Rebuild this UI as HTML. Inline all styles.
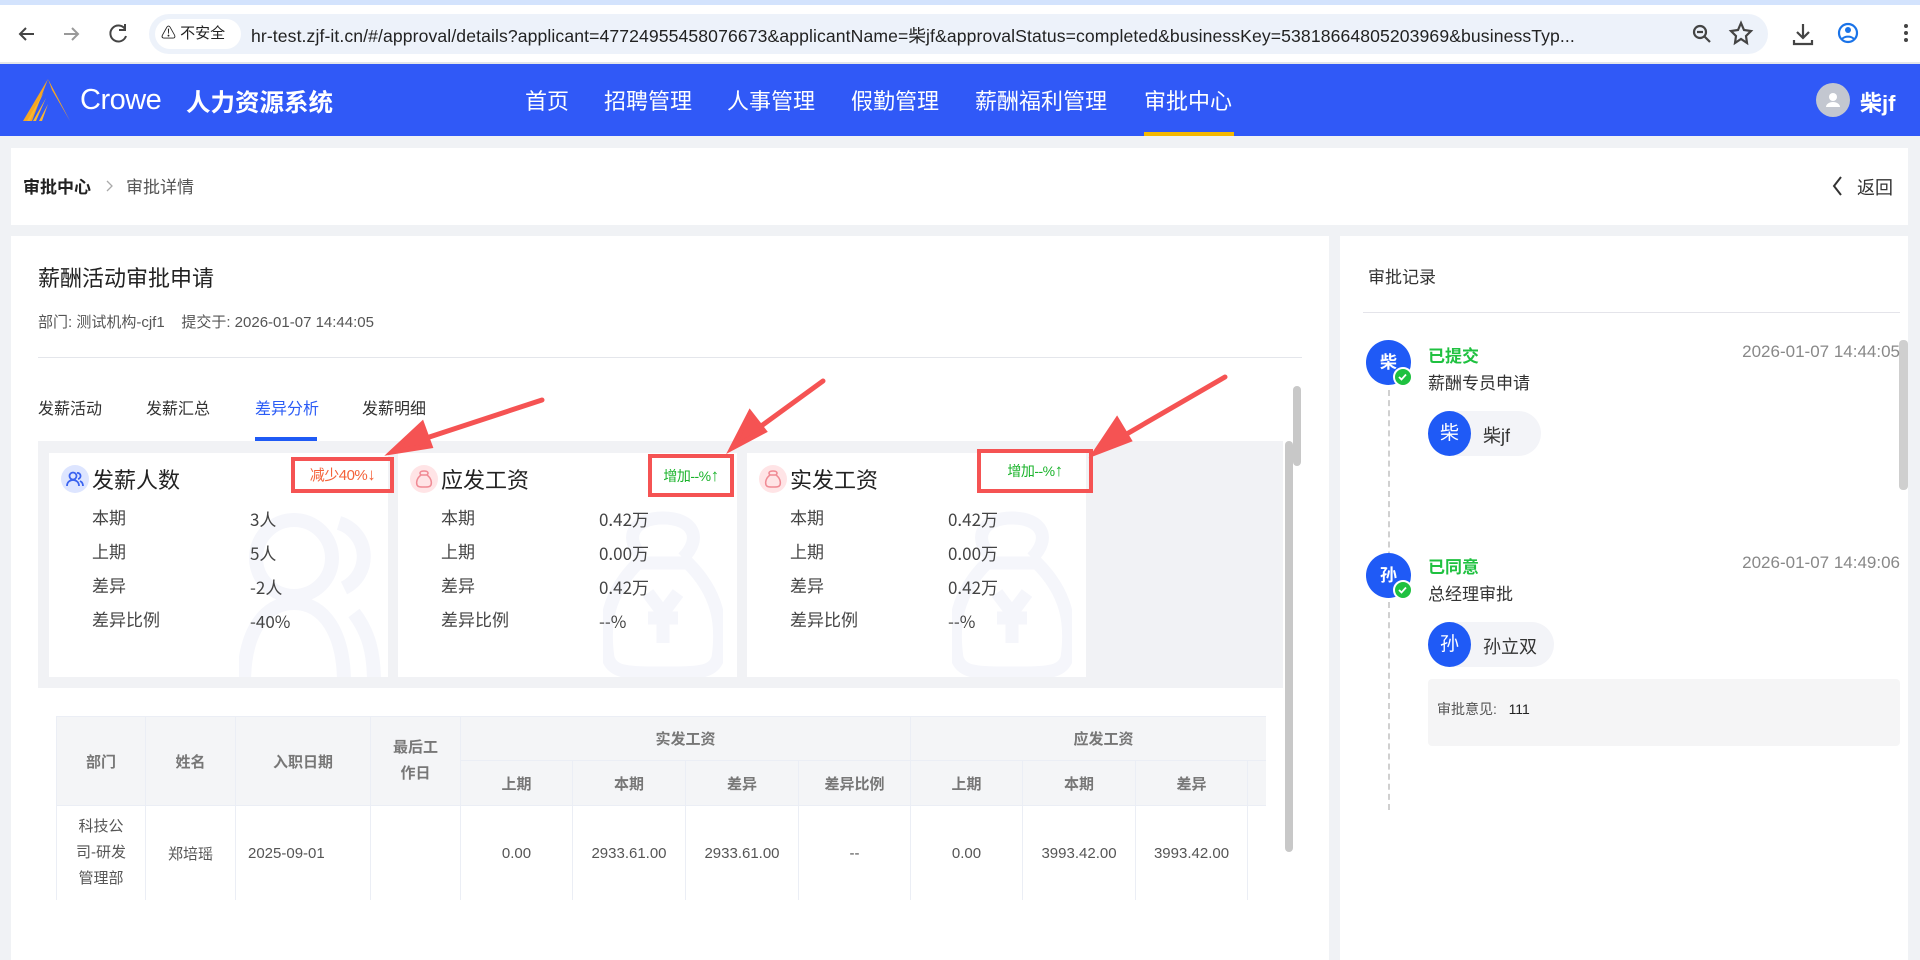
<!DOCTYPE html>
<html><head><meta charset="utf-8"><style>
*{margin:0;padding:0;box-sizing:border-box}
body{width:1920px;height:960px;overflow:hidden;background:#f0f2f5;font-family:"Liberation Sans","Noto Sans CJK SC",sans-serif;position:relative;color:#333}
.a{position:absolute;white-space:nowrap}
.card{position:absolute;background:#fff}
.sc{position:absolute;background:#fff;width:339px;height:224px;overflow:hidden}
.sc .t{position:absolute;left:43px;top:10px;font-size:22px;color:#222}
.sc .ic{position:absolute;left:12px;top:12px;width:28px;height:28px;border-radius:50%}
.sc .l{position:absolute;left:43px;font-size:17px;color:#444;line-height:22px}
.sc .v{position:absolute;left:201px;font-size:17px;color:#444;line-height:22px;font-family:"Noto Sans CJK SC",sans-serif}
table{border-collapse:collapse;position:absolute;left:56px;top:716px;table-layout:fixed}
td,th{border:1px solid #ebeef5;font-size:15px;text-align:center;font-weight:normal}
th{background:#f4f5f7;color:#777;font-weight:bold}
td{color:#555;height:95px}
</style></head><body>
<!-- browser chrome -->
<div class="a" style="left:0;top:0;width:1920px;height:64px;background:#fff"></div>
<div class="a" style="left:0;top:0;width:1920px;height:5px;background:#d3e3fd"></div>
<div class="a" style="left:0;top:62px;width:1920px;height:2px;background:#e3e6ea"></div>
<svg class="a" style="left:0;top:0" width="150" height="64"><g stroke="#444" stroke-width="2" fill="none"><path d="M34 34h-14M26 28l-6 6 6 6"/><path d="M64 34h14M72 28l6 6-6 6" stroke="#999"/><path d="M125 29a8 8 0 1 0 1 7M125 24v6h-6"/></g></svg>
<div class="a" style="left:149px;top:14px;width:1619px;height:40px;border-radius:20px;background:#edf2fa"></div>
<div class="a" style="left:155px;top:19px;width:86px;height:30px;border-radius:15px;background:#fff;font-size:15px;line-height:30px;padding-left:6px;color:#222">⚠ 不安全</div>
<div class="a" style="left:251px;top:23px;font-size:17.6px;color:#222;letter-spacing:0.1px">hr-test.zjf-it.cn/#/approval/details?applicant=47724955458076673&amp;applicantName=柴jf&amp;approvalStatus=completed&amp;businessKey=53818664805203969&amp;businessTyp...</div>
<svg class="a" style="left:1680px;top:18px" width="240" height="40"><g stroke="#444" stroke-width="2.2" fill="none"><circle cx="20" cy="14" r="6"/><path d="M24 18l6 6M17 14h6"/><path d="M61 5l3 7 7 1-5 5 1 7-6-4-6 4 1-7-5-5 7-1z"/><path d="M123 6v13M117 14l6 6 6-6M114 22v4h18v-4"/></g><circle cx="168" cy="15" r="9" stroke="#1a73e8" stroke-width="2.2" fill="none"/><circle cx="168" cy="12" r="3" fill="#1a73e8"/><path d="M162 21a7 5 0 0 1 12 0" stroke="#1a73e8" stroke-width="2" fill="none"/><g fill="#444"><circle cx="226" cy="8" r="2"/><circle cx="226" cy="15" r="2"/><circle cx="226" cy="22" r="2"/></g></svg>
<!-- header -->
<div class="a" style="left:0;top:64px;width:1920px;height:72px;background:#3059f7"></div>
<svg class="a" style="left:22px;top:78px" width="50" height="45"><path d="M26 1L48 43 30 12z" fill="#f5a623"/><path d="M26 1L1 43 10 43z" fill="#f5a623"/><path d="M22 14L5 43h3zM24 20L11 43h3zM26 26L17 43h3" fill="#f7b733"/></svg>
<div class="a" style="left:80px;top:84px;font-size:29px;color:#fff;font-weight:300;letter-spacing:-0.5px">Crowe</div>
<div class="a" style="left:186px;top:84px;font-size:24.5px;color:#fff;font-weight:bold">人力资源系统</div>
<div class="a" style="left:525px;top:84px;font-size:22px;color:#fff">首页</div>
<div class="a" style="left:604px;top:84px;font-size:22px;color:#fff">招聘管理</div>
<div class="a" style="left:727px;top:84px;font-size:22px;color:#fff">人事管理</div>
<div class="a" style="left:851px;top:84px;font-size:22px;color:#fff">假勤管理</div>
<div class="a" style="left:975px;top:84px;font-size:22px;color:#fff">薪酬福利管理</div>
<div class="a" style="left:1144px;top:84px;font-size:22px;color:#fff">审批中心</div>
<div class="a" style="left:1144px;top:132px;width:90px;height:4px;background:#f5b800"></div>
<div class="a" style="left:1816px;top:83px;width:34px;height:34px;border-radius:50%;background:#c3c7d0"></div>
<svg class="a" style="left:1816px;top:83px" width="34" height="34"><circle cx="17" cy="14" r="4" fill="#fff"/><path d="M10 24a7 5 0 0 1 14 0z" fill="#fff"/></svg>
<div class="a" style="left:1860px;top:86px;font-size:22px;color:#fff;font-weight:bold">柴jf</div>
<!-- breadcrumb -->
<div class="card" style="left:11px;top:148px;width:1897px;height:77px"></div>
<div class="a" style="left:23px;top:173px;font-size:17px;font-weight:bold;color:#222">审批中心</div>
<svg class="a" style="left:105px;top:179px" width="10" height="14"><path d="M2 2l5 5-5 5" stroke="#aaa" stroke-width="1.3" fill="none"/></svg>
<div class="a" style="left:126px;top:173px;font-size:17px;color:#555">审批详情</div>
<svg class="a" style="left:1831px;top:175px" width="14" height="22"><path d="M10 2L3 11l7 9" stroke="#333" stroke-width="2" fill="none"/></svg>
<div class="a" style="left:1857px;top:174px;font-size:18px;color:#333">返回</div>
<!-- main card -->
<div class="card" style="left:11px;top:236px;width:1318px;height:724px"></div>
<div class="a" style="left:38px;top:261px;font-size:22px;color:#222">薪酬活动审批申请</div>
<div class="a" style="left:38px;top:311px;font-size:15px;color:#555">部门: 测试机构-cjf1 &nbsp;&nbsp; 提交于: 2026-01-07 14:44:05</div>
<div class="a" style="left:38px;top:357px;width:1264px;height:1px;background:#e4e6eb"></div>
<div class="a" style="left:38px;top:395px;font-size:16px;color:#333">发薪活动</div>
<div class="a" style="left:146px;top:395px;font-size:16px;color:#333">发薪汇总</div>
<div class="a" style="left:255px;top:395px;font-size:16px;color:#2b5cf6">差异分析</div>
<div class="a" style="left:362px;top:395px;font-size:16px;color:#333">发薪明细</div>
<div class="a" style="left:255px;top:437px;width:62px;height:4px;background:#1f5af5"></div>
<div class="a" style="left:38px;top:441px;width:1245px;height:247px;background:#f1f2f5"></div>
<!-- cards -->
<div class="sc" style="left:49px;top:453px">
<svg class="a" style="left:190px;top:50px" width="150" height="180"><g stroke="#f5f6fb" stroke-width="14" fill="none"><circle cx="55" cy="55" r="38"/><path d="M5 180c0-50 20-80 50-80s50 30 50 80"/><path d="M100 20a35 35 0 0 1 5 65M115 110c15 20 20 40 20 70"/></g></svg>
<div class="ic" style="background:#dde5ff"></div>
<svg class="a" style="left:12px;top:12px" width="28" height="28"><g stroke="#3a63f0" stroke-width="1.8" fill="none"><circle cx="12" cy="11" r="3.5"/><path d="M6 21c0-4 3-6 6-6s6 2 6 6M16 8a3 3 0 0 1 1 6M19 16c2 1 3 3 3 5"/></g></svg>
<div class="t">发薪人数</div>
<div class="l" style="top:55px">本期</div><div class="v" style="top:55px">3人</div>
<div class="l" style="top:89px">上期</div><div class="v" style="top:89px">5人</div>
<div class="l" style="top:123px">差异</div><div class="v" style="top:123px">-2人</div>
<div class="l" style="top:157px">差异比例</div><div class="v" style="top:157px">-40%</div>
</div>
<div class="sc" style="left:398px;top:453px">
<svg class="a" style="left:205px;top:55px" width="120" height="170"><g stroke="#f5f6fb" stroke-width="13" fill="none"><path d="M40 50c-20-20-10-40 20-40s40 20 20 40"/><path d="M35 55c-30 30-35 60-30 95 5 15 20 15 55 15s50 0 55-15c5-35 0-65-30-95z"/><path d="M45 85l15 20 15-20M60 105v30M45 110h30"/></g></svg>
<div class="ic" style="background:#ffe4e6"></div>
<svg class="a" style="left:12px;top:12px" width="28" height="28"><g stroke="#f08a94" stroke-width="1.5" fill="none"><path d="M11 10c-2-2-1-4 3-4s5 2 3 4"/><path d="M11 10c-4 3-5 7-4 10 1 2 3 2 7 2s6 0 7-2c1-3 0-7-4-10z"/></g></svg>
<div class="t">应发工资</div>
<div class="l" style="top:55px">本期</div><div class="v" style="top:55px">0.42万</div>
<div class="l" style="top:89px">上期</div><div class="v" style="top:89px">0.00万</div>
<div class="l" style="top:123px">差异</div><div class="v" style="top:123px">0.42万</div>
<div class="l" style="top:157px">差异比例</div><div class="v" style="top:157px">--%</div>
</div>
<div class="sc" style="left:747px;top:453px">
<svg class="a" style="left:205px;top:55px" width="120" height="170"><g stroke="#f5f6fb" stroke-width="13" fill="none"><path d="M40 50c-20-20-10-40 20-40s40 20 20 40"/><path d="M35 55c-30 30-35 60-30 95 5 15 20 15 55 15s50 0 55-15c5-35 0-65-30-95z"/><path d="M45 85l15 20 15-20M60 105v30M45 110h30"/></g></svg>
<div class="ic" style="background:#ffe4e6"></div>
<svg class="a" style="left:12px;top:12px" width="28" height="28"><g stroke="#f08a94" stroke-width="1.5" fill="none"><path d="M11 10c-2-2-1-4 3-4s5 2 3 4"/><path d="M11 10c-4 3-5 7-4 10 1 2 3 2 7 2s6 0 7-2c1-3 0-7-4-10z"/></g></svg>
<div class="t">实发工资</div>
<div class="l" style="top:55px">本期</div><div class="v" style="top:55px">0.42万</div>
<div class="l" style="top:89px">上期</div><div class="v" style="top:89px">0.00万</div>
<div class="l" style="top:123px">差异</div><div class="v" style="top:123px">0.42万</div>
<div class="l" style="top:157px">差异比例</div><div class="v" style="top:157px">--%</div>
</div>
<!-- badges -->
<div class="a" style="left:291px;top:457px;width:103px;height:36px;border:4px solid #f55353;font-size:15px;color:#f4623a;line-height:28px;text-align:center;letter-spacing:-0.5px">减少40%<b style="font-size:17px">↓</b></div>
<div class="a" style="left:648px;top:454px;width:86px;height:43px;border:4px solid #f55353;font-size:14px;color:#19b32a;line-height:35px;text-align:center;letter-spacing:-0.5px">增加--%<b style="font-size:17px">↑</b></div>
<div class="a" style="left:977px;top:449px;width:116px;height:44px;border:4px solid #f55353;font-size:14px;color:#19b32a;line-height:36px;text-align:center;letter-spacing:-0.5px">增加--%<b style="font-size:17px">↑</b></div>
<svg class="a" style="left:0;top:0" width="1920" height="960"><g stroke="#f55353" stroke-width="5" fill="#f55353" stroke-linecap="round">
<path d="M405 445L542 400"/><path d="M392 452l30-28 8 22z"/>
<path d="M742 440L823 381"/><path d="M732 448l18-35 14 18z"/>
<path d="M1106 446L1225 377"/><path d="M1095 453l22-33 12 20z"/>
</g></svg>
<!-- table -->
<div class="a" style="left:56px;top:716px;width:1210px;height:184px;overflow:hidden">
<table style="left:0;top:0;width:1240px">
<colgroup><col style="width:89px"><col style="width:90px"><col style="width:135px"><col style="width:90px"><col style="width:112px"><col style="width:113px"><col style="width:113px"><col style="width:112px"><col style="width:112px"><col style="width:113px"><col style="width:112px"><col style="width:49px"></colgroup>
<tr style="height:44px"><th rowspan="2">部门</th><th rowspan="2">姓名</th><th rowspan="2">入职日期</th><th rowspan="2" style="line-height:26px">最后工<br>作日</th><th colspan="4">实发工资</th><th colspan="4">应发工资</th></tr>
<tr style="height:45px"><th>上期</th><th>本期</th><th>差异</th><th>差异比例</th><th>上期</th><th>本期</th><th>差异</th><th></th></tr>
<tr><td style="line-height:26px">科技公<br>司-研发<br>管理部</td><td>郑培瑶</td><td style="text-align:left;padding-left:12px">2025-09-01</td><td></td><td>0.00</td><td>2933.61.00</td><td>2933.61.00</td><td>--</td><td>0.00</td><td>3993.42.00</td><td>3993.42.00</td><td></td></tr>
</table></div>
<div class="a" style="left:1285px;top:441px;width:8px;height:411px;border-radius:4px;background:#c8c8c8"></div>
<div class="a" style="left:1293px;top:386px;width:8px;height:80px;border-radius:4px;background:#c8c8c8"></div>
<!-- right panel -->
<div class="card" style="left:1340px;top:236px;width:568px;height:724px"></div>
<div class="a" style="left:1368px;top:263px;font-size:17px;color:#333">审批记录</div>
<div class="a" style="left:1363px;top:312px;width:537px;height:1px;background:#e4e4ea"></div>
<div class="a" style="left:1388px;top:390px;height:420px;border-left:2px dashed #d0d0d0"></div>
<div class="a" style="left:1899px;top:340px;width:9px;height:150px;border-radius:4px;background:#cfcfcf"></div>
<!-- item1 -->
<div class="a" style="left:1366px;top:340px;width:45px;height:45px;border-radius:50%;background:#1f5af6;color:#fff;font-size:17px;font-weight:bold;line-height:45px;text-align:center">柴</div>
<div class="a" style="left:1393px;top:367px;width:20px;height:20px;border-radius:50%;background:#1fc140;border:2px solid #fff"></div>
<svg class="a" style="left:1395px;top:369px" width="16" height="16"><path d="M4 8l2.5 2.5L11 5.5" stroke="#fff" stroke-width="1.8" fill="none"/></svg>
<div class="a" style="left:1428px;top:342px;font-size:17px;color:#1fc140;font-weight:bold">已提交</div>
<div class="a" style="left:1428px;top:369px;font-size:17px;color:#333">薪酬专员申请</div>
<div class="a" style="left:1693px;top:342px;font-size:17px;color:#888;width:207px;text-align:right">2026-01-07 14:44:05</div>
<div class="a" style="left:1428px;top:411px;width:113px;height:45px;border-radius:23px;background:#f3f4f8"></div>
<div class="a" style="left:1428px;top:411px;width:43px;height:45px;border-radius:50%;background:#1f5af6;color:#fff;font-size:19px;line-height:45px;text-align:center">柴</div>
<div class="a" style="left:1483px;top:422px;font-size:18px;color:#333">柴jf</div>
<!-- item2 -->
<div class="a" style="left:1366px;top:553px;width:45px;height:45px;border-radius:50%;background:#1f5af6;color:#fff;font-size:17px;font-weight:bold;line-height:45px;text-align:center">孙</div>
<div class="a" style="left:1393px;top:580px;width:20px;height:20px;border-radius:50%;background:#1fc140;border:2px solid #fff"></div>
<svg class="a" style="left:1395px;top:582px" width="16" height="16"><path d="M4 8l2.5 2.5L11 5.5" stroke="#fff" stroke-width="1.8" fill="none"/></svg>
<div class="a" style="left:1428px;top:553px;font-size:17px;color:#1fc140;font-weight:bold">已同意</div>
<div class="a" style="left:1428px;top:580px;font-size:17px;color:#333">总经理审批</div>
<div class="a" style="left:1693px;top:553px;font-size:17px;color:#888;width:207px;text-align:right">2026-01-07 14:49:06</div>
<div class="a" style="left:1428px;top:622px;width:126px;height:45px;border-radius:23px;background:#f3f4f8"></div>
<div class="a" style="left:1428px;top:622px;width:43px;height:45px;border-radius:50%;background:#1f5af6;color:#fff;font-size:19px;line-height:45px;text-align:center">孙</div>
<div class="a" style="left:1483px;top:633px;font-size:18px;color:#333">孙立双</div>
<div class="a" style="left:1428px;top:679px;width:472px;height:67px;border-radius:4px;background:#f5f5f6"></div>
<div class="a" style="left:1437px;top:699px;font-size:14px;color:#555">审批意见: &nbsp; <span style="color:#222">111</span></div>
</body></html>
